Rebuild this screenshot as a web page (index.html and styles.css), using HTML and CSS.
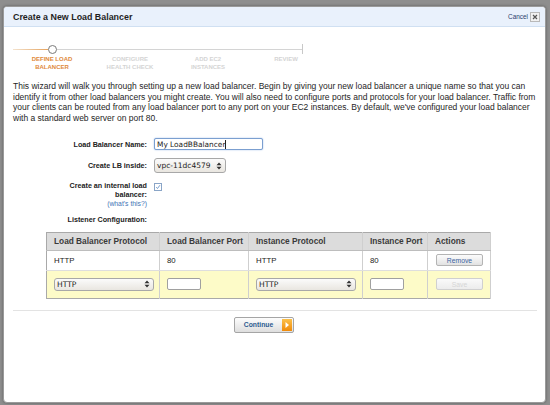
FILE: index.html
```html
<!DOCTYPE html>
<html>
<head>
<meta charset="utf-8">
<link rel="stylesheet" href="styles.css">
</head>
<body>
<div class="modal">
  <div class="header">
    <span class="title">Create a New Load Balancer</span>
    <span class="cancel">Cancel <span class="close"><svg width="8" height="8" viewBox="0 0 8 8"><path d="M2 2 L6 6 M6 2 L2 6" stroke="#555" stroke-width="1.2"/></svg></span></span>
  </div>
  <div class="content">
    <div class="wizard">
      <div class="track">
        <span class="done"></span><span class="dot"></span><span class="rest"></span><span class="tick"></span>
      </div>
      <div class="steps">
        <span class="step active">DEFINE LOAD<br>BALANCER</span>
        <span class="step">CONFIGURE<br>HEALTH CHECK</span>
        <span class="step">ADD EC2<br>INSTANCES</span>
        <span class="step">REVIEW</span>
      </div>
    </div>
    <p class="intro">This wizard will walk you through setting up a new load balancer. Begin by giving your new load balancer a unique name so that you can<br>identify it from other load balancers you might create. You will also need to configure ports and protocols for your load balancer. Traffic from<br>your clients can be routed from any load balancer port to any port on your EC2 instances. By default, we've configured your load balancer<br>with a standard web server on port 80.</p>
    <div class="form">
      <div class="row r1">
        <span class="label">Load Balancer Name:</span>
        <span class="input name">My LoadBBalancer<span class="caret"></span></span>
      </div>
      <div class="row r2">
        <span class="label">Create LB inside:</span>
        <span class="select vpc"><span class="sel-text">vpc-11dc4579</span><svg class="updown" width="6" height="8" viewBox="0 0 6 8"><path d="M3 0.5 L5.5 3.2 H0.5 Z M3 7.5 L5.5 4.8 H0.5 Z" fill="#333"/></svg></span>
      </div>
      <div class="row r3">
        <span class="label">Create an internal load<br>balancer:<span class="help">(what's this?)</span></span>
        <span class="check"><svg width="8" height="8" viewBox="0 0 8 8"><path d="M1.6 4.2 L3.3 6 L6.6 1.6" stroke="#4a7fc0" stroke-width="1" fill="none"/></svg></span>
      </div>
      <div class="row r4">
        <span class="label">Listener Configuration:</span>
      </div>
    </div>
    <table class="listeners">
      <colgroup>
        <col class="c1"><col class="c2"><col class="c3"><col class="c4"><col class="c5">
      </colgroup>
      <tr class="head">
        <th>Load Balancer Protocol</th>
        <th>Load Balancer Port</th>
        <th>Instance Protocol</th>
        <th>Instance Port</th>
        <th>Actions</th>
      </tr>
      <tr class="existing">
        <td>HTTP</td>
        <td>80</td>
        <td>HTTP</td>
        <td>80</td>
        <td><span class="btn">Remove</span></td>
      </tr>
      <tr class="new">
        <td><span class="select wide"><span class="sel-text">HTTP</span><svg class="updown" width="6" height="8" viewBox="0 0 6 8"><path d="M3 0.5 L5.5 3.2 H0.5 Z M3 7.5 L5.5 4.8 H0.5 Z" fill="#333"/></svg></span></td>
        <td><span class="input port"></span></td>
        <td><span class="select wide"><span class="sel-text">HTTP</span><svg class="updown" width="6" height="8" viewBox="0 0 6 8"><path d="M3 0.5 L5.5 3.2 H0.5 Z M3 7.5 L5.5 4.8 H0.5 Z" fill="#333"/></svg></span></td>
        <td><span class="input port"></span></td>
        <td><span class="btn disabled">Save</span></td>
      </tr>
    </table>
    <div class="sep"></div>
    <div class="actions">
      <span class="continue"><span class="ctext">Continue</span><span class="arrow"><svg width="6" height="8" viewBox="0 0 6 8"><path d="M1.5 1 L5 4 L1.5 7 Z" fill="#fff"/></svg></span></span>
    </div>
  </div>
</div>
</body>
</html>
```

FILE: styles.css
```css
html, body {
  margin: 0;
  padding: 0;
}
body {
  width: 550px;
  height: 405px;
  overflow: hidden;
  background: #8e8e8e;
  font-family: "Liberation Sans", Arial, sans-serif;
  color: #222;
}
.modal {
  margin: 6px 4px 0 3px;
  height: 395px;
  border: 1px solid #9a9a9a;
  border-radius: 4px;
  background: #fff;
  box-shadow: 0 0 3px rgba(0,0,0,0.35);
  overflow: hidden;
}
.header {
  height: 19px;
  background: #e9f1fc;
  border-bottom: 1px solid #d0e0f2;
  display: flex;
  align-items: center;
  justify-content: space-between;
  padding: 0 5px 0 9px;
}
.title {
  font-weight: bold;
  font-size: 8.9px;
  color: #1f1f1f;
}
.cancel {
  font-size: 6.4px;
  color: #2a3f6e;
  display: flex;
  align-items: center;
  gap: 2px;
}
.close {
  width: 8px;
  height: 8px;
  border: 1px solid #b9b9b9;
  background: #f1f1f1;
  display: flex;
  align-items: center;
  justify-content: center;
}
.close svg { display: block; }
.content {
  padding: 0 8px 0 9px;
}
.wizard {
  padding-top: 17px;
}
.track {
  width: 290px;
  height: 10px;
  display: flex;
  align-items: center;
}
.done {
  width: 35px;
  height: 1px;
  background: linear-gradient(to right, #f3e3cf, #e6a45f);
}
.dot {
  width: 7px;
  height: 7px;
  border: 1px solid #7a7a7a;
  border-radius: 50%;
  background: #fff;
}
.rest {
  flex: 1;
  height: 1px;
  background: #d4d4d4;
}
.tick {
  width: 1px;
  height: 10px;
  background: #c8c8c8;
}
.steps {
  margin-top: 2px;
  display: grid;
  grid-template-columns: repeat(4, 78px);
}
.step {
  font-size: 6px;
  font-weight: bold;
  line-height: 7.5px;
  text-align: center;
  color: #d4d4d4;
}
.step.active {
  color: #e0893a;
}
.intro {
  margin: 10px 0 0 0;
  font-size: 8.5px;
  line-height: 10.7px;
  color: #262626;
  white-space: nowrap;
}
.form {
  margin-top: 14px;
}
.row {
  display: flex;
  align-items: center;
  gap: 7px;
}
.label {
  width: 134px;
  text-align: right;
  font-weight: bold;
  font-size: 7.2px;
  color: #222;
}
.r1 { height: 13px; }
.r2 { height: 16px; margin-top: 7px; }
.r3 { margin-top: 7px; align-items: flex-start; }
.r3 .label { line-height: 9.5px; }
.r4 { height: 9.5px; margin-top: 6.5px; }
.help {
  display: block;
  font-weight: normal;
  font-size: 6.8px;
  line-height: 8px;
  color: #3f74b5;
}
.input {
  display: flex;
  align-items: center;
  box-sizing: border-box;
  background: #fff;
  border: 1px solid #9a9a9a;
  border-radius: 2px;
  font-family: "DejaVu Sans", sans-serif;
  font-size: 7.4px;
  color: #222;
}
.input.name {
  width: 109px;
  height: 12px;
  padding-left: 2px;
  border-color: #7b9fd0;
  box-shadow: 0 0 1.5px #8fb2e3;
}
.caret {
  width: 1px;
  height: 9px;
  background: #222;
}
.select {
  display: flex;
  align-items: center;
  justify-content: space-between;
  box-sizing: border-box;
  border: 1px solid #a8a8a8;
  border-radius: 3px;
  background: linear-gradient(#fbfbfb, #e9e6e0);
  font-family: "DejaVu Sans", sans-serif;
  font-size: 7.5px;
  color: #222;
  padding: 0 3px 0 2px;
}
.select.vpc {
  width: 72px;
  height: 15px;
}
.updown { display: block; }
.check {
  margin-top: 2px;
  width: 8px;
  height: 8px;
  box-sizing: border-box;
  border: 1px solid #8aa5c7;
  background: #fff;
  display: flex;
  align-items: center;
  justify-content: center;
}
.check svg { display: block; }
.listeners {
  margin: 8px 0 0 33px;
  border-collapse: collapse;
  table-layout: fixed;
  width: 444px;
  border: 1px solid #a9a9a9;
}
.c1 { width: 113px; }
.c2 { width: 89px; }
.c3 { width: 114px; }
.c4 { width: 65px; }
.c5 { width: 63px; }
.listeners th, .listeners td {
  text-align: left;
  padding: 0 0 0 7px;
  border-right: 1px solid #cfcfcf;
  box-sizing: border-box;
}
.listeners th {
  height: 18px;
  background: #dcdcdc;
  font-size: 8.3px;
  font-weight: bold;
  color: #3a3a3a;
  border-bottom: 1px solid #bdbdbd;
}
.existing td {
  height: 20px;
  font-size: 7.8px;
  color: #222;
  border-bottom: 1px solid #dedede;
}
.new td {
  height: 28px;
  background: #fdfbc8;
}
.select.wide {
  width: 100px;
  height: 13px;
  font-size: 7.6px;
}
.input.port {
  width: 34px;
  height: 12px;
  border-color: #a0a0a0;
}
.btn {
  display: flex;
  align-items: center;
  justify-content: center;
  width: 47px;
  height: 12px;
  box-sizing: border-box;
  margin-left: 1px;
  border: 1px solid #b4b4b4;
  border-radius: 2px;
  background: linear-gradient(#fcfcfc, #e2e2e2);
  font-size: 6.8px;
  color: #3b64a0;
}
.btn.disabled {
  color: #d6d6d6;
  border-color: #d0d0d0;
  background: linear-gradient(#fafafa, #ececec);
}
.sep {
  margin-top: 11px;
  height: 1px;
  background: #e3e3e3;
}
.actions {
  margin-top: 6px;
  display: flex;
  padding-left: 221px;
}
.continue {
  width: 60px;
  height: 16px;
  box-sizing: border-box;
  border: 1px solid #a5a5a5;
  border-radius: 2px;
  background: linear-gradient(#fdfdfd, #dedede);
  display: flex;
  align-items: center;
  padding: 0 1px 0 0;
}
.ctext {
  flex: 1;
  text-align: center;
  font-size: 6.8px;
  font-weight: bold;
  color: #2d5b90;
}
.arrow {
  width: 10px;
  height: 12px;
  background: linear-gradient(#fbc04a, #f08a0a);
  display: flex;
  align-items: center;
  justify-content: center;
}
.arrow svg { display: block; }
```
